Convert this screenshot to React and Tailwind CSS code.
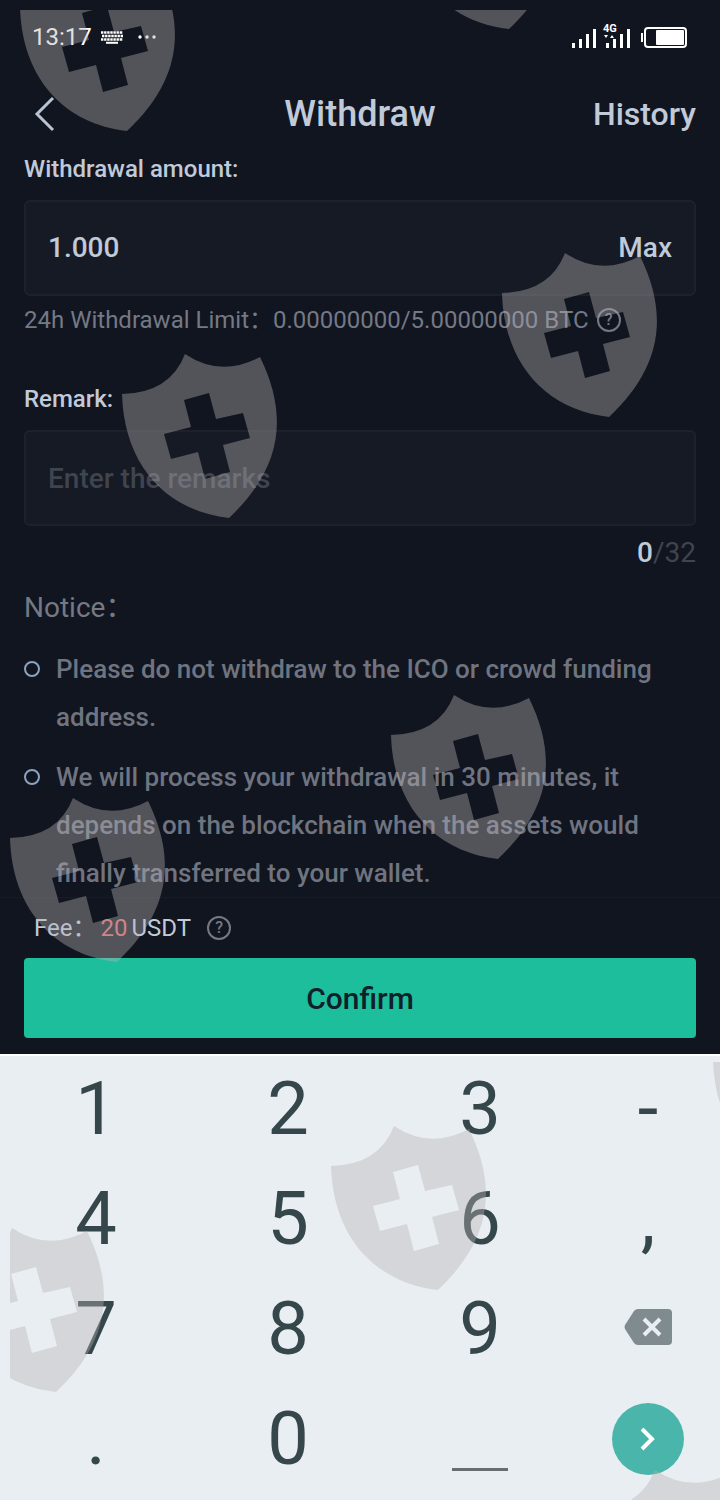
import { useState } from 'react';

const notices = [
  'Please do not withdraw to the ICO or crowd funding address.',
  'We will process your withdrawal in 30 minutes, it depends on the blockchain when the assets would finally transferred to your wallet.'
];

const keys = ['1', '2', '3', '-', '4', '5', '6', ',', '7', '8', '9', 'delete', '.', '0', 'space', 'next'];

const shields = [
  [20, -33], [402, -135], [502, 253], [122, 354], [391, 695],
  [10, 798], [331, 1126], [-51, 1228], [592, 1470]
];

const shieldPath =
  'M0 40Q48 39 63 0Q99 24 138 3C167 62 160 114 107 164C45 157 2 112 0 40Z' +
  'M62 46L69 73L42 80L49 105L76 98L83 125L108 118L101 91L128 84L121 59L94 65L87 39Z';

function Watermark() {
  return (
    <svg className="absolute inset-0 w-full h-full pointer-events-none" aria-hidden="true">
      <defs>
        <clipPath id="edge"><rect x="10" y="10" width="2000" height="3000" /></clipPath>
        <clipPath id="keypadEdge"><rect x="10" y="1062" width="2000" height="3000" /></clipPath>
      </defs>
      <g clipPath="url(#edge)" fill="#b6b2b4" fillOpacity="0.4" fillRule="evenodd">
        {shields.map(([x, y]) => (
          <path key={`${x},${y}`} d={shieldPath} transform={`translate(${x} ${y})`} />
        ))}
      </g>
      <g clipPath="url(#keypadEdge)" fill="#b6b2b4" fillOpacity="0.4" fillRule="evenodd">
        <path d={shieldPath} transform="translate(713 1020)" />
      </g>
    </svg>
  );
}

function StatusBar() {
  return (
    <div className="h-[74px] px-8 flex items-center justify-between text-white">
      <div className="flex items-center gap-2">
        <span className="text-2xl">13:17</span>
        <svg width="24" height="14" viewBox="0 0 24 14">
          <path d="M1 2.500H23M2 6H23M1 9.500H23" stroke="#fff" strokeWidth="2.600" strokeDasharray="2.400 0.700" />
          <path d="M6 12.800H18" stroke="#fff" strokeWidth="2" />
        </svg>
        <svg width="20" height="6" viewBox="0 0 20 6" className="ml-1" fill="#fff">
          <circle cx="4" cy="3" r="1.700" />
          <circle cx="11" cy="3" r="1.700" />
          <circle cx="18" cy="3" r="1.700" />
        </svg>
      </div>
      <div className="flex items-center gap-2">
        <svg width="62" height="28" viewBox="0 0 62 28">
          <path d="M3.500 25V20M10.500 25V16M17.500 25V11M24.500 25V6M37.500 25V20M44.500 25V16M51.500 25V11M58.500 25V6" stroke="#fff" strokeWidth="3" />
          <path d="M34 12H38L36 15ZM40 15L42 12L44 15Z" fill="#fff" />
          <text x="33" y="9" fill="#fff" fontSize="11" fontWeight="700">4G</text>
        </svg>
        <svg width="48" height="24" viewBox="0 0 48 24">
          <path d="M2 8V17" stroke="#fff" strokeWidth="2" />
          <rect x="5" y="3" width="41" height="19" rx="3" fill="none" stroke="#fff" strokeWidth="2" />
          <rect x="16" y="5" width="28" height="15" rx="1" fill="#fff" />
        </svg>
      </div>
    </div>
  );
}

function HelpButton({ label }) {
  return (
    <button
      aria-label={label}
      className="w-6 h-6 rounded-full border-2 border-[#747985] text-[#747985] text-base leading-5 font-medium flex items-center justify-center"
    >?</button>
  );
}

function KeyFace({ name }) {
  if (name === 'delete') {
    return (
      <svg width="48" height="36" viewBox="0 0 48 36" className="mb-1">
        <path d="M14 0H44Q48 0 48 4V32Q48 36 44 36H14Q11.500 36 10 34L1 20Q0 18 1 16L10 2Q11.500 0 14 0Z" fill="#808b8f" />
        <path d="M20 10L36 26M36 10L20 26" stroke="#e9eef2" strokeWidth="4" />
      </svg>
    );
  }
  if (name === 'space') return <span className="w-14 h-[3px] mt-15 bg-[#666e74]" />;
  if (name === 'next') {
    return (
      <span className="w-[72px] h-[72px] rounded-full bg-[#4ab5aa] flex items-center justify-center">
        <svg width="24" height="28" viewBox="0 0 24 28" fill="none" stroke="#fff" strokeWidth="4">
          <path d="M6 4L16 14L6 24" />
        </svg>
      </span>
    );
  }
  return name;
}

export default function App() {
  const [amount, setAmount] = useState('1.000');
  const [remark, setRemark] = useState('');

  const press = key => {
    if (key === 'delete') setAmount(a => a.slice(0, -1));
    else if (key !== 'space' && key !== 'next') setAmount(a => a + key);
  };

  return (
    <div className="relative overflow-hidden min-h-screen flex flex-col bg-[#11151f] text-[#c0cad9] font-['Roboto','Noto_Sans_CJK_SC',sans-serif]">
      <StatusBar />
      <header className="h-20 px-6 grid grid-cols-3 items-center font-medium">
        <button aria-label="Back" className="justify-self-start pl-2">
          <svg width="24" height="36" viewBox="0 0 24 36" fill="none" stroke="#b9c3d3" strokeWidth="3">
            <path d="M21 2L5 18L21 34" />
          </svg>
        </button>
        <h1 className="justify-self-center text-[36px]">Withdraw</h1>
        <a href="#history" className="justify-self-end text-[32px]">History</a>
      </header>

      <main className="px-6">
        <label htmlFor="amount" className="block text-[24px] leading-[30px] font-medium">Withdrawal amount:</label>
        <div className="mt-4 h-24 px-[22px] flex items-center rounded-md border-2 border-[#1c212b] bg-[#161a24] text-[28px] font-medium">
          <input
            id="amount"
            type="text"
            inputMode="decimal"
            value={amount}
            onChange={e => setAmount(e.target.value)}
            className="flex-1 min-w-0 bg-transparent outline-none"
          />
          <button onClick={() => setAmount('5.00000000')}>Max</button>
        </div>
        <div className="mt-2 flex items-center gap-2 text-[24px] leading-[32px] text-[#747985]">
          <span>24h Withdrawal Limit：0.00000000/5.00000000 BTC</span>
          <HelpButton label="About the limit" />
        </div>

        <label htmlFor="remark" className="block mt-12 text-[24px] leading-[30px] font-medium">Remark:</label>
        <input
          id="remark"
          type="text"
          maxLength={32}
          placeholder="Enter the remarks"
          value={remark}
          onChange={e => setRemark(e.target.value)}
          className="block mt-4 w-full h-24 px-[22px] rounded-md border-2 border-[#1c212b] bg-[#161a24] text-[28px] font-medium outline-none placeholder:text-[#3f444f]"
        />
        <div className="mt-3 text-right text-[28px] leading-[30px] text-[#3f444f]">
          <span className="font-medium text-[#c0cad9]">{remark.length}</span>/32
        </div>

        <h2 className="mt-6 text-[28px] leading-[32px] text-[#747985]">Notice：</h2>
        <ul className="mt-[21px] flex flex-col gap-3 text-[26px] leading-[48px] font-medium text-[#6f7480]">
          {notices.map(text => (
            <li key={text} className="flex gap-4">
              <span className="w-4 h-4 mt-4 shrink-0 rounded-full border-2 border-[#8ca3bf]" />
              <span>{text}</span>
            </li>
          ))}
        </ul>
      </main>

      <footer className="px-6 pb-4 border-t border-[#171b25]">
        <div className="h-[60px] pl-[10px] flex items-center text-[24px]">
          <span>Fee：</span>
          <span className="mx-1 text-[#d96a6d]">20</span>
          <span className="mr-4">USDT</span>
          <HelpButton label="About the fee" />
        </div>
        <button className="w-full h-20 rounded-sm bg-[#1dbe9b] text-[#10202a] text-[30px] font-medium">Confirm</button>
      </footer>

      <div className="flex-1 bg-[#e9eef2] text-[#36474c] shadow-[inset_0_2px_0_#fff]">
        <div className="grid grid-cols-[4fr_4fr_4fr_3fr] auto-rows-[110px]">
          {keys.map(key => (
            <button
              key={key}
              aria-label={key}
              onClick={() => press(key)}
              className="flex items-center justify-center text-[74px] leading-none"
            >
              <KeyFace name={key} />
            </button>
          ))}
        </div>
      </div>
      <Watermark />
    </div>
  );
}
